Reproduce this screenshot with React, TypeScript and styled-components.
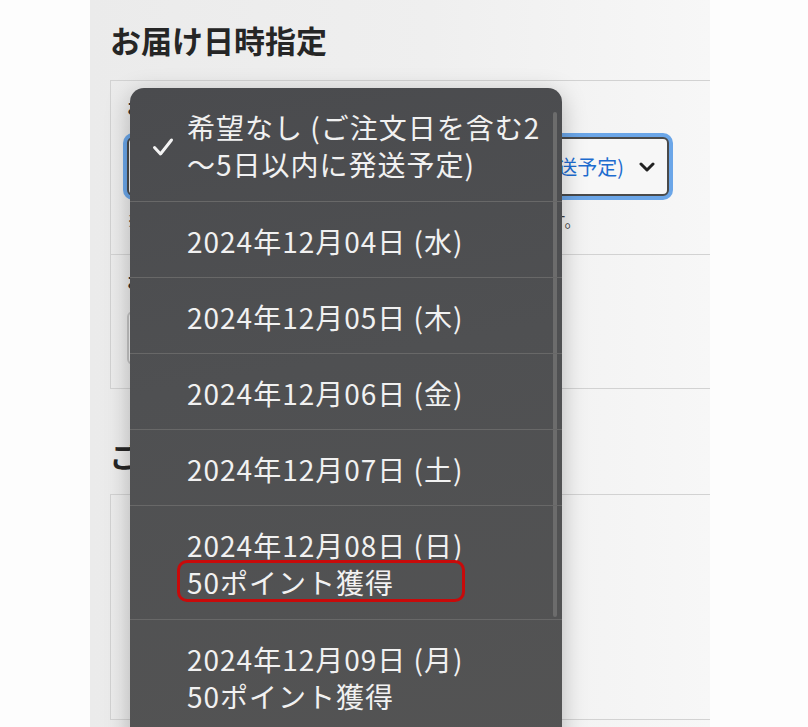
import React from 'react';
import styled, { createGlobalStyle } from 'styled-components';

const GlobalStyle = createGlobalStyle`
  body {
    margin: 0;
    background: #ffffff;
    font-family: 'Noto Sans CJK JP', 'Noto Sans', sans-serif;
  }
`;

const Screen = styled.div`
  width: 808px;
  height: 727px;
  overflow: hidden;
  display: flex;
  background: #ffffff;
`;

const Gutter = styled.div<{ $w: number }>`
  width: ${(p) => p.$w}px;
  flex-shrink: 0;
  background: #fdfdfd;
`;

const Sheet = styled.main`
  position: relative;
  width: 620px;
  flex-shrink: 0;
  padding-left: 20px;
  box-sizing: border-box;
  background: linear-gradient(to right, #ebebeb 0%, #efefef 55%, #f7f7f7 100%);
`;

const Title = styled.h2`
  margin: 0;
  padding: 22px 0 0;
  height: 80px;
  box-sizing: border-box;
  font-size: 31px;
  font-weight: 700;
  color: #262626;
  line-height: 36px;
`;

const Card = styled.section<{ $h?: number }>`
  border: 1px solid #d2d2d2;
  border-right: none;
  ${(p) => (p.$h ? `height: ${p.$h}px;` : '')}
`;

const Row = styled.div<{ $h: number }>`
  height: ${(p) => p.$h}px;
  box-sizing: border-box;
  padding: 14px 0 0 16px;
  & + & {
    border-top: 1px solid #d2d2d2;
  }
`;

const FieldLabel = styled.div`
  font-size: 17px;
  font-weight: 700;
  color: #333;
  line-height: 24px;
  margin-bottom: 18px;
`;

const Select = styled.div<{ $focus?: boolean }>`
  width: ${(p) => (p.$focus ? 542 : 420)}px;
  height: ${(p) => (p.$focus ? 59 : 54)}px;
  box-sizing: border-box;
  border: 2px solid ${(p) => (p.$focus ? '#4a4a4a' : '#c4c4c4')};
  border-radius: 6px;
  background: #f7f7f7;
  box-shadow: ${(p) => (p.$focus ? '0 0 0 4px #6ba6e8' : 'none')};
  display: flex;
  align-items: center;
  justify-content: flex-end;
  padding: 0 12px 0 14px;
  gap: 15px;
  color: #1d6ccf;
  font-size: 20px;
  white-space: nowrap;
  overflow: hidden;
`;

const Note = styled.p`
  margin: 12px 0 0;
  font-size: 16px;
  letter-spacing: 0.3px;
  color: #444;
  line-height: 24px;
  white-space: nowrap;
`;

const SectionTitle = styled.h2`
  margin: 0;
  padding: 49px 0 0;
  height: 105px;
  box-sizing: border-box;
  font-size: 28px;
  font-weight: 700;
  color: #262626;
  line-height: 36px;
`;

const Menu = styled.div`
  position: absolute;
  left: 40px;
  top: 88px;
  width: 432px;
  height: 700px;
  border-radius: 14px 14px 0 0;
  background: linear-gradient(170deg, #4a4b4e 0%, #4f5052 40%, #545454 100%);
  box-shadow: 0 6px 24px rgba(0, 0, 0, 0.25);
  overflow: hidden;
  color: #f1f1f1;
`;

const Item = styled.div<{ $multi?: boolean }>`
  position: relative;
  padding: 21px 20px 18px 57px;
  font-size: 28px;
  line-height: ${(p) => (p.$multi ? 37 : 36)}px;
  letter-spacing: 1px;
  white-space: nowrap;
  & + & {
    border-top: 1px solid #686868;
  }
`;

const Check = styled.svg`
  position: absolute;
  left: 22px;
  top: 49px;
`;

const Highlight = styled.div`
  position: absolute;
  left: 47px;
  top: 54px;
  width: 288px;
  height: 42px;
  box-sizing: border-box;
  border: 3px solid #c80a0a;
  border-radius: 10px;
`;

const Scrollbar = styled.div`
  position: absolute;
  right: 5px;
  top: 24px;
  width: 4px;
  height: 505px;
  border-radius: 2px;
  background: #6c6c6c;
`;

const dates = [
  { d: '2024年12月04日 (水)' },
  { d: '2024年12月05日 (木)' },
  { d: '2024年12月06日 (金)' },
  { d: '2024年12月07日 (土)' },
  { d: '2024年12月08日 (日)', pt: true, mark: true },
  { d: '2024年12月09日 (月)', pt: true },
];

export default function App() {
  return (
    <>
      <GlobalStyle />
      <Screen>
        <Gutter $w={90} />
        <Sheet>
          <Title>お届け日時指定</Title>
          <Card>
            <Row $h={173}>
              <FieldLabel>お届け日</FieldLabel>
              <Select $focus>
                <span>希望なし (ご注文日を含む2〜5日以内に発送予定)</span>
                <svg width="16" height="10" viewBox="0 0 16 10">
                  <path d="M2 2l6 6 6-6" fill="none" stroke="#222" strokeWidth="3" strokeLinecap="round" strokeLinejoin="round" />
                </svg>
              </Select>
              <Note>※天候や交通状況により、お届けが遅れる場合がございます。</Note>
            </Row>
            <Row $h={134}>
              <FieldLabel>お届け時間帯</FieldLabel>
              <Select>
                <span>指定なし</span>
              </Select>
            </Row>
          </Card>
          <SectionTitle>ご注文内容</SectionTitle>
          <Card $h={224} />

          <Menu>
            <Scrollbar />
            <Item $multi>
              <Check width="22" height="20" viewBox="0 0 22 20">
                <path d="M2.5 10.5l6 6.5L19.5 3" fill="none" stroke="#f3f3f3" strokeWidth="3" strokeLinecap="round" strokeLinejoin="round" />
              </Check>
              希望なし (ご注文日を含む2
              <br />
              〜5日以内に発送予定)
            </Item>
            {dates.map((x) => (
              <Item key={x.d} $multi={x.pt}>
                {x.d}
                {x.pt && (
                  <>
                    <br />
                    50ポイント獲得
                  </>
                )}
                {x.mark && <Highlight />}
              </Item>
            ))}
          </Menu>
        </Sheet>
        <Gutter $w={98} />
      </Screen>
    </>
  );
}
